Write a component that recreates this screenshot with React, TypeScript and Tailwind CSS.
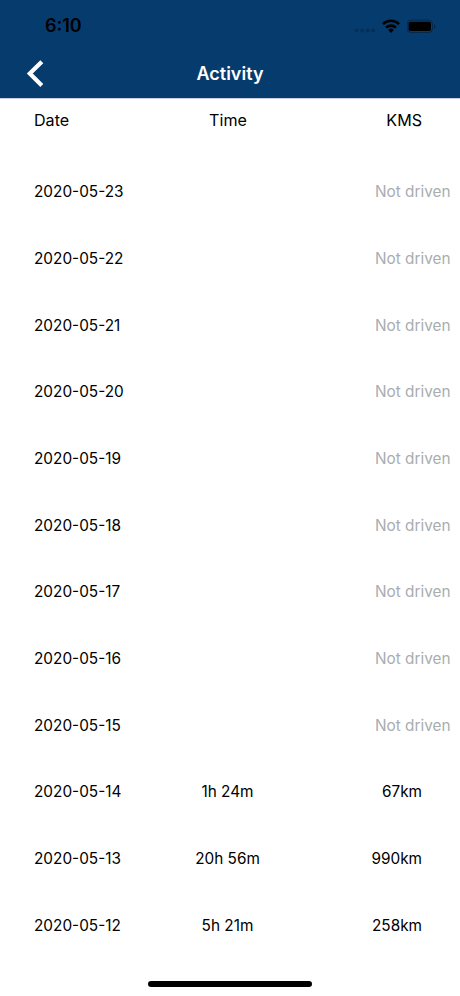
interface ActivityEntry {
  date: string;
  time?: string;
  kms?: string;
}

const entries: ActivityEntry[] = [
  { date: '2020-05-23' },
  { date: '2020-05-22' },
  { date: '2020-05-21' },
  { date: '2020-05-20' },
  { date: '2020-05-19' },
  { date: '2020-05-18' },
  { date: '2020-05-17' },
  { date: '2020-05-16' },
  { date: '2020-05-15' },
  { date: '2020-05-14', time: '1h 24m', kms: '67km' },
  { date: '2020-05-13', time: '20h 56m', kms: '990km' },
  { date: '2020-05-12', time: '5h 21m', kms: '258km' },
];

function StatusBar() {
  return (
    <div className="flex h-[50px] items-center justify-between pl-[45px] pr-[23px] pt-[2px] text-black">
      <span className="text-[18px] font-semibold leading-none">6:10</span>
      <div className="flex items-center pb-px">
        {/* No signal */}
        <svg className="mr-[7px] h-4 w-5" viewBox="0 0 20 16" fill="#000" fillOpacity="0.22">
          <rect x="0" y="10.8" width="3.4" height="3.4" rx="1" />
          <rect x="5.5" y="10.8" width="3.4" height="3.4" rx="1" />
          <rect x="11" y="10.8" width="3.4" height="3.4" rx="1" />
          <rect x="16.5" y="10.8" width="3.4" height="3.4" rx="1" />
        </svg>
        {/* Wifi */}
        <svg className="mr-[7px] h-4 w-[18px]" viewBox="0 0 18 16" fill="none" stroke="#000" strokeWidth="2.6">
          <path d="M1 6.1a11.4 11.4 0 0 1 16 0" />
          <path d="M4.1 9.6a7 7 0 0 1 9.8 0" />
          <path d="M9 14.9L6.2 11.9a4 4 0 0 1 5.6 0z" fill="#000" stroke="none" />
        </svg>
        {/* Battery */}
        <svg className="h-4 w-[30px]" viewBox="0 0 30 16">
          <rect x="0.2" y="2.1" width="25.3" height="12.4" rx="3.6" fill="none" stroke="#000" strokeOpacity="0.3" />
          <rect x="1.6" y="3.8" width="22.4" height="9.2" rx="1.8" fill="#000" />
          <path d="M27 6.2c1.8.7 1.8 3.7 0 4.4z" fill="#000" fillOpacity="0.4" />
        </svg>
      </div>
    </div>
  );
}

function ActivityRow({ entry }: { entry: ActivityEntry }) {
  return (
    <div className="flex h-[66.67px] items-center text-[15.35px]">
      <span className="w-[156px] pl-[34px]">{entry.date}</span>
      <span className="w-[143px] text-center">{entry.time}</span>
      {entry.kms ? (
        <span className="flex-1 pr-[38px] text-right">{entry.kms}</span>
      ) : (
        <span className="flex-1 pr-[9.5px] text-right text-[#a9adb0]">Not driven</span>
      )}
    </div>
  );
}

export default function App() {
  return (
    <div className="flex h-[996px] w-[460px] flex-col overflow-hidden bg-white font-['Inter',sans-serif] text-black">
      <header className="h-[98.5px] border-b border-[#c9cfe0] bg-[#063b6d]">
        <StatusBar />
        <div className="grid h-[47px] grid-cols-[1fr_auto_1fr] items-center text-white">
          <button className="ml-[26px] w-[18px]" aria-label="Back">
            <svg className="h-7 w-[18px]" viewBox="0 0 18 28" fill="none" stroke="currentColor" strokeWidth="4.2">
              <path d="M15.8 1.8L3.8 13.6l12 11.8" />
            </svg>
          </button>
          <h1 className="text-[18px] font-semibold">Activity</h1>
        </div>
      </header>
      <div className="flex h-[60px] pt-[9.5px] text-[16.1px]">
        <span className="w-[156px] pl-[34px]">Date</span>
        <span className="w-[144px] text-center">Time</span>
        <span className="flex-1 pr-[38px] text-right">KMS</span>
      </div>
      <main className="flex-1">
        {entries.map((entry) => (
          <ActivityRow key={entry.date} entry={entry} />
        ))}
      </main>
      {/* Home indicator */}
      <div className="mx-auto mb-[9px] h-[6px] w-[164px] shrink-0 rounded-full bg-black" />
    </div>
  );
}
